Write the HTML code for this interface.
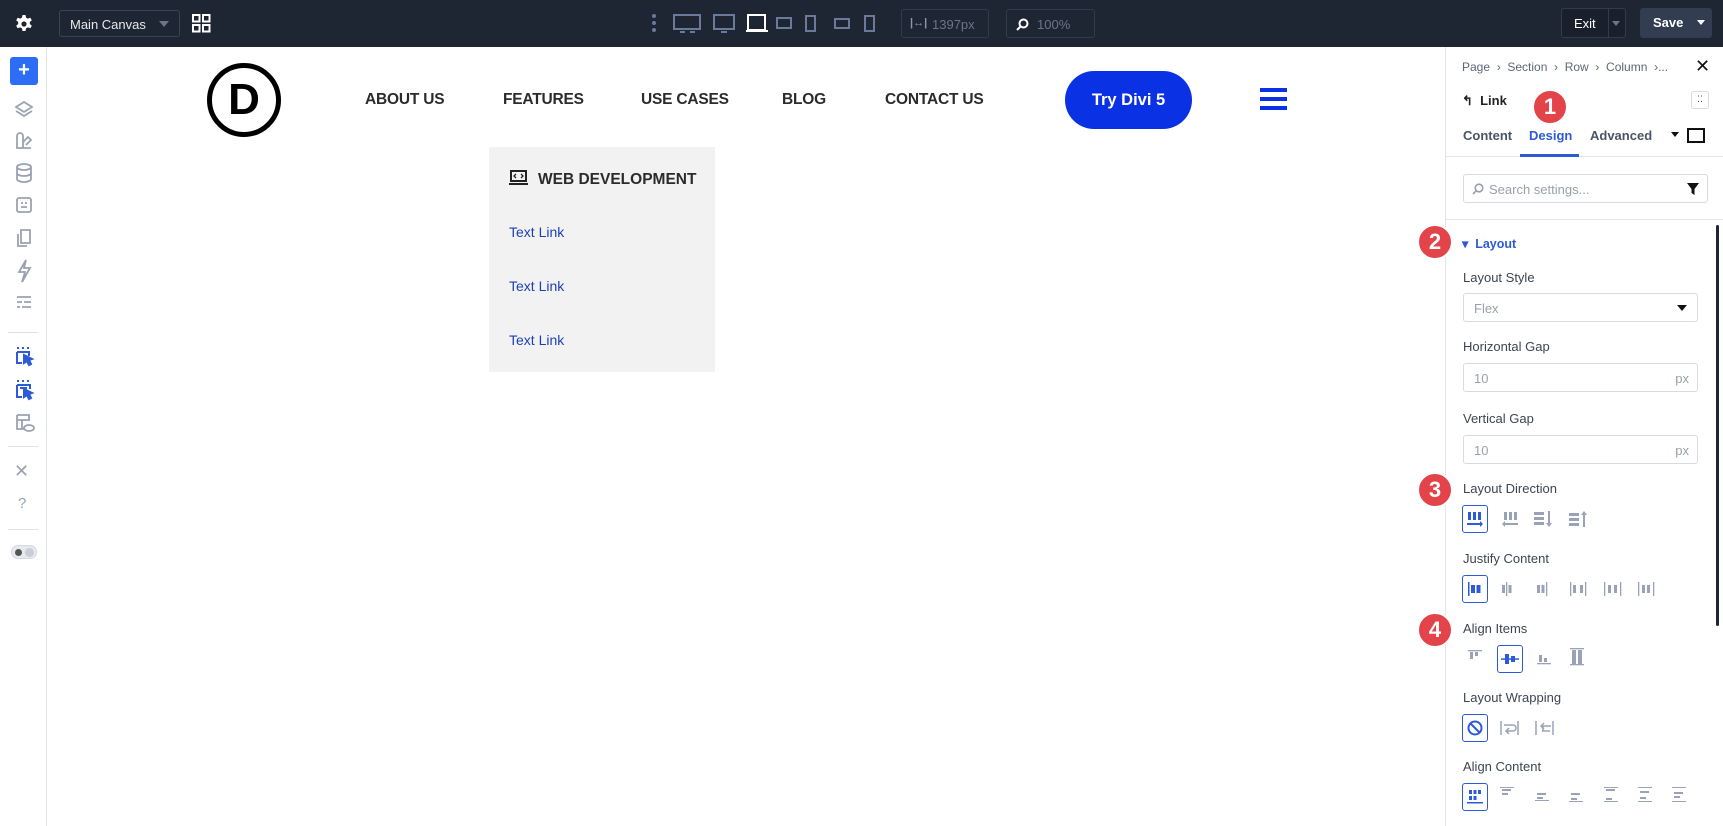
<!DOCTYPE html>
<html><head><meta charset="utf-8"><style>
*{box-sizing:border-box;margin:0;padding:0}
body{width:1723px;height:826px;overflow:hidden;background:#fff;font-family:"Liberation Sans",sans-serif;position:relative}
.a{position:absolute}
#top{left:0;top:0;width:1723px;height:47px;background:#1f2633}
#side{left:0;top:47px;width:47px;height:779px;background:#fff;border-right:1px solid #e2e5ea}
#panel{left:1445px;top:47px;width:278px;height:779px;background:#fff;border-left:1px solid #e2e5ea}
.nav{top:91px;font-size:15.5px;font-weight:bold;color:#2b2b2b;letter-spacing:-.2px}
.lbl{font-size:13px;color:#3d4452;left:1463px}
.inp{left:1463px;width:235px;height:29px;border:1px solid #d8dce2;border-radius:3px;font-size:13px;color:#9aa0aa;padding:7px 10px}
.ic{width:26px;height:28px;display:flex;align-items:center;justify-content:center}
.sel{border:1.5px solid #2d5bd8;border-radius:3px}
.badge{width:36px;height:36px;border-radius:50%;background:#e2444a;color:#fff;font-size:22px;font-weight:bold;display:flex;align-items:center;justify-content:center;border:2px solid #fff}
</style></head><body>
<div id="top" class="a">
 <svg class="a" style="left:15px;top:15px" width="18" height="18" viewBox="0 0 18 18"><path fill="#fff" d="M7.5 0h3l.5 2.6 1.8 1 2.5-.9 1.5 2.6-2 1.7v2l2 1.7-1.5 2.6-2.5-.9-1.8 1-.5 2.6h-3l-.5-2.6-1.8-1-2.5.9-1.5-2.6 2-1.7v-2l-2-1.7 1.5-2.6 2.5.9 1.8-1z"/><circle cx="9" cy="9" r="2.6" fill="#1f2633"/></svg>
 <div class="a" style="left:59px;top:10px;width:121px;height:27px;border:1px solid #3a4356;border-radius:3px;color:#e6e8ec;font-size:13px;padding:6px 10px">Main Canvas<span style="position:absolute;right:10px;top:10px;border:5px solid transparent;border-top:6px solid #6b7587"></span></div>
 <svg class="a" style="left:192px;top:14px" width="19" height="19"><g fill="none" stroke="#fff" stroke-width="2"><rect x="1" y="1" width="6.5" height="6.5"/><rect x="11" y="1" width="6.5" height="6.5"/><rect x="1" y="11" width="6.5" height="6.5"/><rect x="11" y="11" width="6.5" height="6.5"/></g></svg>
 <svg class="a" style="left:650px;top:12px" width="460" height="24" viewBox="0 0 460 24"><g fill="#6b7a9a"><circle cx="4" cy="4" r="2"/><circle cx="4" cy="11" r="2"/><circle cx="4" cy="18" r="2"/></g>
 <g fill="none" stroke="#6b7a9a" stroke-width="2"><rect x="24" y="3" width="26" height="14"/><line x1="30" y1="20" x2="35" y2="20"/><line x1="40" y1="20" x2="45" y2="20"/><rect x="64" y="3" width="20" height="14"/><line x1="71" y1="20" x2="77" y2="20"/><rect x="127" y="6" width="14" height="10"/><rect x="156" y="4" width="9" height="15"/><rect x="185" y="7" width="14" height="9"/><rect x="215" y="4" width="9" height="15"/></g>
 <rect x="98" y="3" width="17" height="15" fill="none" stroke="#fff" stroke-width="2"/><line x1="96" y1="19" x2="118" y2="19" stroke="#fff" stroke-width="2"/></svg>
 <div class="a" style="left:901px;top:9px;width:88px;height:29px;border:1px solid #323b4d;border-radius:3px;color:#6b7587;font-size:13px;padding:7px 0 0 30px">1397px<span style="position:absolute;left:8px;top:7px;color:#8b96ad;font-size:11px;font-weight:bold">|↔|</span></div>
 <div class="a" style="left:1006px;top:9px;width:89px;height:29px;border:1px solid #323b4d;border-radius:3px;color:#6b7587;font-size:13px;padding:7px 0 0 30px">100%<svg style="position:absolute;left:9px;top:8px" width="13" height="13"><circle cx="7.5" cy="5.5" r="4" fill="none" stroke="#fff" stroke-width="2"/><line x1="4.5" y1="8.5" x2="1" y2="12" stroke="#fff" stroke-width="2"/></svg></div>
 <div class="a" style="left:1561px;top:8px;width:65px;height:30px;border:1px solid #323b4d;border-radius:3px;background:#1a202b;color:#fff;font-size:13px;padding:7px 0 0 12px">Exit<span style="position:absolute;left:46px;top:0;width:1px;height:28px;background:#323b4d"></span><span style="position:absolute;right:5px;top:12px;border:4px solid transparent;border-top:5px solid #6b7587"></span></div>
 <div class="a" style="left:1640px;top:8px;width:72px;height:30px;border-radius:3px;background:#323d52;color:#fff;font-size:13px;font-weight:bold;padding:7px 0 0 13px">Save<span style="position:absolute;right:7px;top:12px;border:4px solid transparent;border-top:5px solid #fff"></span></div>
</div>
<div id="side" class="a">
 <div class="a" style="left:10px;top:10px;width:28px;height:28px;background:#2d6cf5;border-radius:3px;color:#fff;font-size:20px;font-weight:bold;text-align:center;line-height:27px">+</div>
 <svg class="a" style="left:14px;top:53px" width="20" height="240" viewBox="0 0 20 240" fill="none" stroke="#9aa2b2" stroke-width="1.8">
  <path d="M10 2 L18 7 L10 12 L2 7 Z M2 11 L10 16 L18 11"/>
  <path d="M3 36 V48 H17 M3 36 a3 3 0 0 1 6 0 V48 M9 42 l5 -5 l3 3 l-5 5"/>
  <ellipse cx="10" cy="67" rx="7" ry="3"/><path d="M3 67 V79 a7 3 0 0 0 14 0 V67 M3 73 a7 3 0 0 0 14 0"/>
  <rect x="3" y="98" width="14" height="14" rx="2"/><path d="M7 103 h2 M11 103 h2 M7 107 h6"/>
  <path d="M7 130 h9 v13 h-9 z M4 134 v12 h9"/>
  <path d="M12 160 L5 172 H11 L8 182 L16 168 H10 Z"/>
  <path d="M3 197 h14 M3 202 h5 M10 202 h7 M3 207 h3 M8 207 h9" />
 </svg>
 <div class="a" style="left:8px;top:285px;width:30px;height:1px;background:#dde0e5"></div>
 <svg class="a" style="left:14px;top:298px" width="22" height="90" viewBox="0 0 22 90" fill="none" stroke="#2d5bd8" stroke-width="2">
  <path d="M3 3 h2 M8 3 h2 M13 3 h2 M3 7 v11 h5 M3 7 h12 v4"/><path d="M10 10 l8 4 -3 1 2 4 -2 1 -2 -4 -3 2 z" fill="#2d5bd8"/>
  <path d="M3 36 h2 M8 36 h2 M13 36 h2 M3 40 v12 h5 M3 40 h13 v4 M6 43 h7"/><path d="M10 44 l8 4 -3 1 2 4 -2 1 -2 -4 -3 2 z" fill="#2d5bd8"/>
  <g stroke="#9aa2b2" stroke-width="1.8"><path d="M3 70 h12 v6 M3 70 v14 h7 M3 75 h12 M8 75 v9"/><ellipse cx="15" cy="83" rx="5" ry="3"/></g>
 </svg>
 <div class="a" style="left:8px;top:399px;width:30px;height:1px;background:#dde0e5"></div>
 <div class="a" style="left:14px;top:414px;color:#9aa2b2;font-size:18px">✕</div>
 <div class="a" style="left:18px;top:448px;color:#9aa2b2;font-size:15px">?</div>
 <div class="a" style="left:8px;top:482px;width:30px;height:1px;background:#dde0e5"></div>
 <div class="a" style="left:11px;top:498px;width:26px;height:14px;border-radius:7px;background:#e7e9ee;border:1px solid #d5d9e0"><span style="position:absolute;left:3px;top:3px;width:7px;height:7px;border-radius:50%;background:#555"></span><span style="position:absolute;right:2px;top:2px;width:9px;height:9px;border-radius:50%;background:#c8cdd6"></span></div>
</div>

<!-- canvas -->
<div class="a" style="left:207px;top:63px;width:74px;height:74px;border:5px solid #000;border-radius:50%;font-size:44px;font-weight:bold;text-align:center;line-height:63px;color:#000;font-family:'Liberation Sans',sans-serif">D</div>
<div class="a nav" style="left:365px">ABOUT US</div>
<div class="a nav" style="left:503px">FEATURES</div>
<div class="a nav" style="left:641px">USE CASES</div>
<div class="a nav" style="left:782px">BLOG</div>
<div class="a nav" style="left:885px">CONTACT US</div>
<div class="a" style="left:1065px;top:71px;width:127px;height:58px;border-radius:29px;background:#0b31e4;color:#fff;font-size:16.5px;font-weight:bold;text-align:center;line-height:58px">Try Divi 5</div>
<div class="a" style="left:1260px;top:88px;width:27px;height:4px;background:#0b31e4;box-shadow:0 9px 0 #0b31e4,0 18px 0 #0b31e4"></div>
<div class="a" style="left:489px;top:147px;width:226px;height:225px;background:#f2f2f2">
 <svg class="a" style="left:20px;top:23px" width="19" height="16" fill="none" stroke="#222" stroke-width="2"><rect x="2" y="1" width="15" height="10"/><path d="M0 14 h19"/><path d="M7 4 l-2 2 2 2 M12 4 l2 2 -2 2" stroke-width="1.3"/></svg>
 <div class="a" style="left:49px;top:24px;font-size:15.5px;font-weight:bold;color:#2b2b2b">WEB DEVELOPMENT</div>
 <div class="a" style="left:20px;top:77px;font-size:14px;color:#1d3fb8">Text Link</div>
 <div class="a" style="left:20px;top:131px;font-size:14px;color:#1d3fb8">Text Link</div>
 <div class="a" style="left:20px;top:185px;font-size:14px;color:#1d3fb8">Text Link</div>
</div>

<div id="panel" class="a"></div>
<div class="a" style="left:1462px;top:60px;font-size:12px;color:#5e6675">Page &nbsp;›&nbsp; Section &nbsp;›&nbsp; Row &nbsp;›&nbsp; Column &nbsp;›...</div>
<div class="a" style="left:1695px;top:56px;font-size:18px;color:#111">✕</div>
<div class="a" style="left:1462px;top:93px;font-size:13px;font-weight:bold;color:#222">↰ &nbsp;Link</div>
<div class="a" style="left:1691px;top:91px;width:18px;height:18px;border:1px solid #d8dce2;border-radius:3px;font-size:9px;text-align:center;line-height:15px;color:#333">⁚⁚</div>
<div class="a" style="left:1463px;top:128px;font-size:13px;color:#4b5466;font-weight:bold">Content</div>
<div class="a" style="left:1529px;top:128px;font-size:13px;color:#2d5bd8;font-weight:bold">Design</div>
<div class="a" style="left:1590px;top:128px;font-size:13px;color:#4b5466;font-weight:bold">Advanced</div>
<div class="a" style="left:1671px;top:132px;border:4px solid transparent;border-top:5px solid #111"></div>
<div class="a" style="left:1687px;top:128px;width:18px;height:15px;border:2px solid #111"></div>
<div class="a" style="left:1446px;top:156px;width:277px;height:1px;background:#e2e5ea"></div>
<div class="a" style="left:1520px;top:154px;width:59px;height:3px;background:#2d5bd8"></div>
<div class="a inp" style="top:174px;width:245px;height:29px;padding-left:25px;font-size:13px">Search settings...<svg style="position:absolute;left:8px;top:8px" width="12" height="12"><circle cx="7" cy="5" r="3.8" fill="none" stroke="#9aa0aa" stroke-width="1.6"/><line x1="4.2" y1="7.8" x2="1" y2="11" stroke="#9aa0aa" stroke-width="1.6"/></svg><svg style="position:absolute;right:8px;top:8px" width="12" height="12"><path d="M0 0 H12 L7.5 6 V12 L4.5 10 V6 Z" fill="#111"/></svg></div>
<div class="a" style="left:1446px;top:219px;width:277px;height:1px;background:#e2e5ea"></div>
<div class="a" style="left:1716px;top:225px;width:3px;height:401px;background:#1f2633;border-radius:2px"></div>
<div class="a" style="left:1462px;top:236px;font-size:12.5px;color:#2d5bd8;font-weight:bold">▾ &nbsp;Layout</div>
<div class="a lbl" style="top:270px">Layout Style</div>
<div class="a inp" style="top:293px;height:29px">Flex<span style="position:absolute;right:10px;top:11px;border:5px solid transparent;border-top:6px solid #111"></span></div>
<div class="a lbl" style="top:339px">Horizontal Gap</div>
<div class="a inp" style="top:363px">10<span style="position:absolute;right:8px;top:7px">px</span></div>
<div class="a lbl" style="top:411px">Vertical Gap</div>
<div class="a inp" style="top:435px">10<span style="position:absolute;right:8px;top:7px">px</span></div>
<div class="a lbl" style="top:481px">Layout Direction</div>
<div class="a lbl" style="top:551px">Justify Content</div>
<div class="a lbl" style="top:621px">Align Items</div>
<div class="a lbl" style="top:690px">Layout Wrapping</div>
<div class="a lbl" style="top:759px">Align Content</div>

<div class="a ic sel" style="left:1462px;top:505px"><svg width="16" height="16" fill="#2d5bd8"><rect x="1" y="1" width="3" height="8"/><rect x="6" y="1" width="3" height="8"/><rect x="11" y="1" width="3" height="8"/><path d="M0 12 h13 v-2 l3 3 -3 3 v-2 h-13z"/></svg></div>
<div class="a ic" style="left:1497px;top:505px"><svg width="16" height="16" fill="#9aa2b8"><rect x="2" y="1" width="3" height="8"/><rect x="7" y="1" width="3" height="8"/><rect x="12" y="1" width="3" height="8"/><path d="M16 12 h-13 v-2 l-3 3 3 3 v-2 h13z"/></svg></div>
<div class="a ic" style="left:1530px;top:505px"><svg width="18" height="16" fill="#9aa2b8"><rect x="0" y="1" width="10" height="3"/><rect x="0" y="6" width="10" height="3"/><rect x="0" y="11" width="10" height="3"/><path d="M14 0 v12 h-2 l3 4 3 -4 h-2 v-12z"/></svg></div>
<div class="a ic" style="left:1565px;top:505px"><svg width="18" height="16" fill="#9aa2b8"><rect x="0" y="2" width="10" height="3"/><rect x="0" y="7" width="10" height="3"/><rect x="0" y="12" width="10" height="3"/><path d="M14 16 v-12 h-2 l3 -4 3 4 h-2 v12z"/></svg></div>

<div class="a ic sel" style="left:1462px;top:575px"><svg width="16" height="14" fill="#2d5bd8"><rect x="1" y="0" width="1.5" height="14"/><rect x="4" y="3" width="4" height="8"/><rect x="9.5" y="3" width="4" height="8"/></svg></div>
<svg class="a" style="left:1497px;top:582px" width="200" height="14" fill="#9aa2b8">
 <rect x="5" y="3" width="3" height="8"/><rect x="9" y="0" width="1.3" height="14"/><rect x="11.5" y="3" width="3" height="8"/>
 <rect x="40" y="3" width="3" height="8"/><rect x="44.5" y="3" width="3" height="8"/><rect x="49" y="0" width="1.3" height="14"/>
 <rect x="73" y="0" width="1.3" height="14"/><rect x="76" y="3" width="3" height="8"/><rect x="83" y="3" width="3" height="8"/><rect x="88" y="0" width="1.3" height="14"/>
 <rect x="107" y="0" width="1.3" height="14"/><rect x="111" y="3" width="3" height="8"/><rect x="117" y="3" width="3" height="8"/><rect x="123" y="0" width="1.3" height="14"/>
 <rect x="141" y="0" width="1.3" height="14"/><rect x="145" y="3" width="3" height="8"/><rect x="150" y="3" width="3" height="8"/><rect x="156" y="0" width="1.3" height="14"/>
</svg>

<svg class="a" style="left:1468px;top:649px" width="16" height="16" fill="#9aa2b8"><rect x="0" y="1" width="14" height="1.3"/><rect x="2" y="3" width="3" height="7"/><rect x="7" y="3" width="3" height="4"/></svg>
<div class="a ic sel" style="left:1497px;top:645px"><svg width="18" height="14" fill="#2d5bd8"><rect x="0" y="6.3" width="18" height="1.5"/><rect x="4" y="2" width="4" height="10"/><rect x="10" y="4" width="4" height="6"/></svg></div>
<svg class="a" style="left:1537px;top:650px" width="16" height="16" fill="#9aa2b8"><rect x="0" y="13" width="14" height="1.3"/><rect x="2" y="5" width="3" height="7"/><rect x="7" y="8" width="3" height="4"/></svg>
<svg class="a" style="left:1570px;top:648px" width="16" height="18" fill="#9aa2b8"><rect x="0" y="0" width="14" height="1.3"/><rect x="0" y="16" width="14" height="1.3"/><rect x="2" y="2" width="4" height="14"/><rect x="8" y="2" width="4" height="14"/></svg>

<div class="a ic sel" style="left:1462px;top:714px"><svg width="16" height="16" fill="none" stroke="#2d5bd8" stroke-width="2"><circle cx="8" cy="8" r="6.5"/><line x1="3.5" y1="3.5" x2="12.5" y2="12.5"/></svg></div>
<svg class="a" style="left:1500px;top:720px" width="80" height="16" fill="none" stroke="#9aa2b8" stroke-width="1.5"><path d="M1 1 v14 M18 1 v14 M4 5 h9 a3 3 0 0 1 0 6 h-6 M9 8 l-3 3 3 3"/><path d="M36 1 v14 M53 1 v14 M50 11 h-8 M43 11 v-5 h8 M44 3 l-3 3 3 3"/></svg>

<div class="a ic sel" style="left:1462px;top:783px"><svg width="16" height="16" fill="#2d5bd8"><rect x="2" y="1" width="3" height="4"/><rect x="6.5" y="1" width="3" height="4"/><rect x="11" y="1" width="3" height="4"/><rect x="2" y="7" width="3" height="4"/><rect x="6.5" y="7" width="3" height="4"/><rect x="0" y="13" width="16" height="1.5"/></svg></div>
<svg class="a" style="left:1500px;top:787px" width="200" height="18" fill="#9aa2b8">
 <g><rect x="0" y="0" width="14" height="1"/><rect x="2" y="2" width="9" height="2"/><rect x="2" y="6" width="6" height="2"/></g>
 <g transform="translate(35 0)"><rect x="2" y="6" width="9" height="2"/><rect x="2" y="10" width="6" height="2"/><rect x="0" y="13" width="14" height="1"/></g>
 <g transform="translate(69 0)"><rect x="2" y="6" width="9" height="2"/><rect x="2" y="11" width="6" height="2"/><rect x="0" y="14" width="14" height="1"/></g>
 <g transform="translate(104 0)"><rect x="0" y="0" width="14" height="1"/><rect x="2" y="2" width="9" height="2"/><rect x="2" y="11" width="6" height="2"/><rect x="0" y="14" width="14" height="1"/></g>
 <g transform="translate(138 0)"><rect x="0" y="0" width="14" height="1"/><rect x="2" y="4" width="9" height="2"/><rect x="2" y="10" width="6" height="2"/><rect x="0" y="14" width="14" height="1"/></g>
 <g transform="translate(172 0)"><rect x="0" y="0" width="14" height="1"/><rect x="2" y="5" width="9" height="2"/><rect x="2" y="9" width="6" height="2"/><rect x="0" y="14" width="14" height="1"/></g>
</svg>

<div class="a badge" style="left:1532px;top:89px">1</div>
<div class="a badge" style="left:1417px;top:224px">2</div>
<div class="a badge" style="left:1417px;top:472px">3</div>
<div class="a badge" style="left:1417px;top:612px">4</div>
</body></html>
